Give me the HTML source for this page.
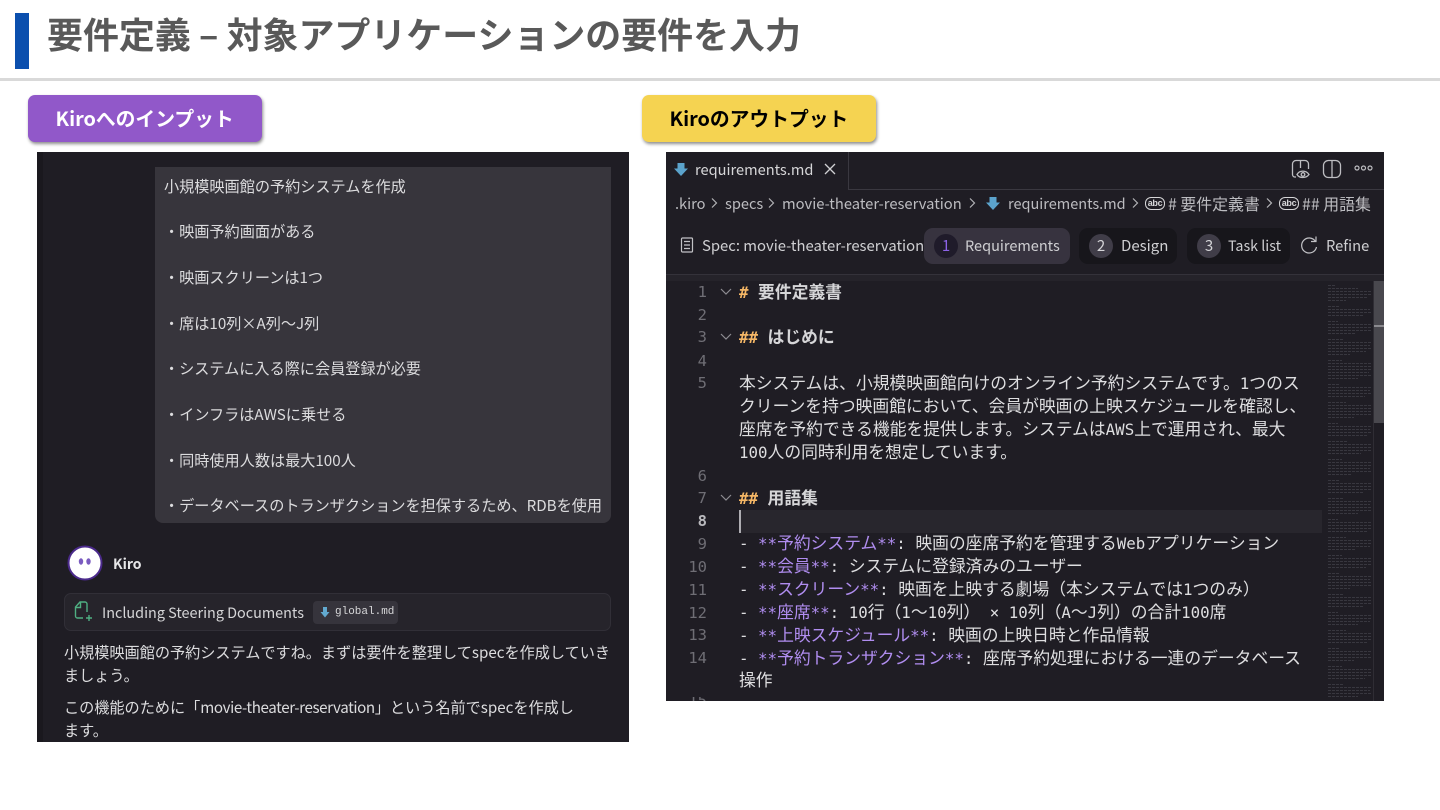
<!DOCTYPE html>
<html lang="ja"><head><meta charset="utf-8"><title>要件定義</title>
<style>
*{margin:0;padding:0;box-sizing:border-box}
html,body{width:1440px;height:810px;overflow:hidden;background:#fff}
body{position:relative;font-family:"Liberation Sans","Noto Sans CJK JP",sans-serif}
.a{position:absolute;white-space:nowrap}
.n{font-family:"Noto Sans CJK JP",sans-serif}
.t{font-family:"Noto Sans CJK JP",sans-serif;font-size:15.15px;line-height:22px;color:#dcdcde;filter:blur(.25px)}
.u{left:164px}
.e{left:739px;font-family:"Noto Sans CJK JP",sans-serif;font-size:16.8px;line-height:22px;color:#dedee0;height:22px;filter:blur(.25px)}
.m{font-family:"DejaVu Sans Mono",monospace;font-size:15.8px;line-height:1;white-space:pre}
.l{width:40px;text-align:right;left:667px;font-family:"DejaVu Sans Mono",monospace;font-size:15.5px;line-height:22px;color:#6f6e75;filter:blur(.25px)}
.p{color:#b08df0}
.o{color:#f5b766;font-weight:700}
.b{font-weight:700;color:#d6d6d8}
.tb{font-family:"Noto Sans CJK JP",sans-serif;font-size:14.6px;line-height:22px;color:#cfcfd2;filter:blur(.25px)}
.bc{color:#bcbcc0;top:193px}
.pill{position:absolute;top:228px;height:36px;border-radius:9px;background:#17161b}
.c{position:absolute;top:234px;width:24px;height:24px;border-radius:50%;background:#403d48;color:#d5d5d8;text-align:center;font:15px/24px "Noto Sans CJK JP",sans-serif}
.abc{position:absolute;top:197px;width:20px;height:13px;border:1.5px solid #d6d6d8;border-radius:6px;font:700 9px/10px 'Liberation Sans',sans-serif;color:#d6d6d8;text-align:center;letter-spacing:-.3px}
</style></head><body>

<div class="a" style="left:15px;top:13px;width:14px;height:56px;background:#0b4fae"></div>
<div class="a n" style="left:47px;top:7px;font-size:35.95px;line-height:52px;font-weight:700;color:#595959">要件定義 – 対象アプリケーションの要件を入力</div>
<div class="a" style="left:0;top:78px;width:1440px;height:3px;background:#d9d9d9"></div>

<div class="a n" style="left:28px;top:95px;width:234px;height:47px;border-radius:7px;background:#9158c9;box-shadow:1px 2px 3px rgba(0,0,0,.45);color:#fff;font-size:19.8px;font-weight:700;line-height:46px;padding-left:27.500px">Kiroへのインプット</div>
<div class="a n" style="left:642px;top:95px;width:234px;height:47px;border-radius:7px;background:#f5d351;box-shadow:1px 2px 3px rgba(0,0,0,.45);color:#000;font-size:19.8px;font-weight:700;line-height:46px;padding-left:27.500px">Kiroのアウトプット</div>

<!-- left panel -->
<div class="a" style="left:37px;top:152px;width:592px;height:590px;background:#1f1d24;overflow:hidden"></div>
<div class="a" style="left:37px;top:152px;width:6px;height:590px;background:#1a181e"></div>
<div class="a" style="left:155px;top:167px;width:456px;height:356px;background:#37353c;border-radius:0 0 8px 8px"></div>
<div class="a t u" style="top:175px">小規模映画館の予約システムを作成</div>
<div class="a t u" style="top:220px">・映画予約画面がある</div>
<div class="a t u" style="top:266px">・映画スクリーンは1つ</div>
<div class="a t u" style="top:312px">・席は10列×A列〜J列</div>
<div class="a t u" style="top:357px">・システムに入る際に会員登録が必要</div>
<div class="a t u" style="top:403px">・インフラはAWSに乗せる</div>
<div class="a t u" style="top:448.500px">・同時使用人数は最大100人</div>
<div class="a t u" style="top:494px">・データベースのトランザクションを担保するため、RDBを使用</div>

<svg class="a" style="left:67px;top:545px" width="36" height="36" viewBox="0 0 36 36">
<circle cx="18" cy="18" r="16.500" fill="#fff" stroke="#4b2a8c" stroke-width="2"/>
<ellipse cx="14" cy="16.500" rx="2.200" ry="3.200" fill="#7a5bc0"/><ellipse cx="21.500" cy="16.500" rx="2.200" ry="3.200" fill="#7a5bc0"/>
</svg>
<div class="a n" style="left:113px;top:553px;font-size:14px;line-height:22px;font-weight:700;color:#e6e6e8">Kiro</div>

<div class="a" style="left:64px;top:593px;width:547px;height:38px;background:#26242b;border:1px solid #312f37;border-radius:7px"></div>
<svg class="a" style="left:72px;top:600px" width="24" height="24" viewBox="0 0 24 24" fill="none" stroke="#4fae82" stroke-width="1.400">
<path d="M11 18H5.500a2 2 0 0 1-2-2V7l4.500-5h5a2 2 0 0 1 2 2v8"/><path d="M8.500 2.500v5H4"/><path d="M17 15v6M14 18h6"/>
</svg>
<div class="a n" style="left:102px;top:602px;font-size:14.4px;line-height:22px;color:#d6d6d8">Including Steering Documents</div>
<div class="a" style="left:313px;top:601px;width:85px;height:23px;background:#36343c;border-radius:4px"></div>
<svg class="a" style="left:320px;top:607px" width="10" height="11" viewBox="0 0 10 11"><path d="M3 0h4v5h2.500L5 10.500.5 5H3z" fill="#62a9cf"/></svg>
<div class="a" style="left:335px;top:602px;font-family:'Liberation Mono',monospace;font-size:11px;line-height:20px;color:#d6d6d8">global.md</div>

<div class="a t" style="left:64px;top:641px">小規模映画館の予約システムですね。まずは要件を整理してspecを作成していき</div>
<div class="a t" style="left:64px;top:664px">ましょう。</div>
<div class="a t" style="left:64px;top:696px">この機能のために「<span style="letter-spacing:-.4px">movie-theater-reservation</span>」という名前でspecを作成し</div>
<div class="a t" style="left:64px;top:718.500px">ます。</div>

<!-- right panel -->
<div class="a" style="left:666px;top:152px;width:718px;height:549px;background:#1f1d24"></div>
<div class="a" style="left:666px;top:152px;width:183px;height:38px;background:#1f1d24;border-right:1px solid #3a3840"></div>
<div class="a" style="left:849px;top:189px;width:535px;height:1px;background:#3a3840"></div>
<svg class="a" style="left:674px;top:162px" width="14" height="15" viewBox="0 0 14 15"><path d="M3.500 1h7v5.500H14L7 14 0 6.500h3.500z" fill="#5ba3cc"/></svg>
<div class="a tb" style="left:695px;top:159px;color:#d6d6d8">requirements.md</div>
<svg class="a" style="left:824px;top:163px" width="12" height="12" viewBox="0 0 12 12" stroke="#d0d0d3" stroke-width="1.300"><path d="M1 1l10 10M11 1L1 11"/></svg>

<svg class="a" style="left:1291px;top:159px" width="22" height="20" viewBox="0 0 22 20" fill="none" stroke="#bdbdc1" stroke-width="1.300">
<path d="M5 18H4a2.500 2.500 0 0 1-2.500-2.500V5A3.500 3.500 0 0 1 5 1.500h9A3.500 3.500 0 0 1 17.500 5v5"/><path d="M9.500 1.500V9"/><path d="M6 15.500c2.500-4.500 9-4.500 12 0-3 4-9.500 4-12 0z"/><circle cx="12" cy="15.500" r="1.800"/>
</svg>
<svg class="a" style="left:1322px;top:159px" width="20" height="20" viewBox="0 0 20 20" fill="none" stroke="#bdbdc1" stroke-width="1.300"><rect x="1.500" y="1.500" width="17" height="17" rx="5"/><path d="M10 1.500v17"/></svg>
<svg class="a" style="left:1354px;top:164px" width="20" height="8" viewBox="0 0 20 8" fill="none" stroke="#bdbdc1" stroke-width="1.200"><circle cx="3" cy="4" r="2"/><circle cx="9.500" cy="4" r="2"/><circle cx="16" cy="4" r="2"/></svg>

<svg class="a" style="left:710px;top:197px" width="8" height="12" viewBox="0 0 8 12" fill="none" stroke="#b4b4b8" stroke-width="1.200"><path d="M2 1.500L6.500 6 2 10.500"/></svg>
<svg class="a" style="left:767px;top:197px" width="8" height="12" viewBox="0 0 8 12" fill="none" stroke="#b4b4b8" stroke-width="1.200"><path d="M2 1.500L6.500 6 2 10.500"/></svg>
<svg class="a" style="left:968px;top:197px" width="8" height="12" viewBox="0 0 8 12" fill="none" stroke="#b4b4b8" stroke-width="1.200"><path d="M2 1.500L6.500 6 2 10.500"/></svg>
<svg class="a" style="left:1131px;top:197px" width="8" height="12" viewBox="0 0 8 12" fill="none" stroke="#b4b4b8" stroke-width="1.200"><path d="M2 1.500L6.500 6 2 10.500"/></svg>
<svg class="a" style="left:1265px;top:197px" width="8" height="12" viewBox="0 0 8 12" fill="none" stroke="#b4b4b8" stroke-width="1.200"><path d="M2 1.500L6.500 6 2 10.500"/></svg>

<div class="a tb bc" style="left:675px">.kiro</div>
<div class="a tb bc" style="left:725px">specs</div>
<div class="a tb bc" style="left:782px;font-size:14.75px">movie-theater-reservation</div>
<svg class="a" style="left:986px;top:196px" width="14" height="15" viewBox="0 0 14 15"><path d="M3.500 1h7v5.500H14L7 14 0 6.500h3.500z" fill="#5ba3cc"/></svg>
<div class="a tb bc" style="left:1008px;font-size:14.5px">requirements.md</div>
<div class="abc" style="left:1145px">abc</div>
<div class="a tb bc" style="left:1168px;font-size:15.9px"># 要件定義書</div>
<div class="abc" style="left:1279px">abc</div>
<div class="a tb bc" style="left:1302px;font-size:15.9px">## 用語集</div>

<svg class="a" style="left:680px;top:237px" width="14" height="16" viewBox="0 0 14 16" fill="none" stroke="#c2c2c6" stroke-width="1.200"><rect x="1.500" y="1" width="11" height="14" rx="1"/><path d="M4 4.500h6M4 8h6M4 11.500h6"/></svg>
<div class="a tb" style="left:702px;top:235px;font-size:14.85px">Spec: movie-theater-reservation</div>
<div class="pill" style="left:924px;width:146px;background:#37333f"></div>
<div class="c" style="left:934px;background:#1f1b2a;color:#8d63e8">1</div>
<div class="a tb" style="left:965px;top:235px;font-size:14.5px">Requirements</div>
<div class="pill" style="left:1079px;width:98px"></div>
<div class="c" style="left:1089px">2</div>
<div class="a tb" style="left:1121px;top:235px;font-size:15px">Design</div>
<div class="pill" style="left:1187px;width:103px"></div>
<div class="c" style="left:1197px">3</div>
<div class="a tb" style="left:1228px;top:235px;font-size:14.3px">Task list</div>
<svg class="a" style="left:1300px;top:235px" width="19" height="20" viewBox="0 0 19 20" fill="none" stroke="#c2c2c6" stroke-width="1.200"><path d="M15.500 6.500A7.500 7.500 0 1 0 16.500 12"/><path d="M16 1.500v5h-5"/></svg>
<div class="a tb" style="left:1326px;top:235px;font-size:14.7px">Refine</div>
<div class="a" style="left:666px;top:274px;width:718px;height:1px;background:#34323a"></div>
<div class="a" style="left:666px;top:275px;width:718px;height:6px;background:#25232a"></div>

<!-- line numbers -->
<div class="a l" style="top:281px">1</div>
<div class="a l" style="top:304px">2</div>
<div class="a l" style="top:326px">3</div>
<div class="a l" style="top:350px">4</div>
<div class="a l" style="top:372px">5</div>
<div class="a l" style="top:465px">6</div>
<div class="a l" style="top:487px">7</div>
<div class="a l" style="top:510px;color:#b9b9bd;font-weight:700">8</div>
<div class="a l" style="top:533px">9</div>
<div class="a l" style="top:556px">10</div>
<div class="a l" style="top:579px">11</div>
<div class="a l" style="top:602px">12</div>
<div class="a l" style="top:624px">13</div>
<div class="a l" style="top:647px">14</div>
<div class="a" style="left:666px;top:697px;width:42px;height:4px;overflow:hidden"><div class="a l" style="left:1px;top:0;line-height:8px">15</div></div>

<svg class="a" style="left:720px;top:288px" width="12" height="8" viewBox="0 0 12 8" fill="none" stroke="#8d8c92" stroke-width="1.200"><path d="M1 1l5 5 5-5"/></svg>
<svg class="a" style="left:720px;top:333px" width="12" height="8" viewBox="0 0 12 8" fill="none" stroke="#8d8c92" stroke-width="1.200"><path d="M1 1l5 5 5-5"/></svg>
<svg class="a" style="left:720px;top:494px" width="12" height="8" viewBox="0 0 12 8" fill="none" stroke="#8d8c92" stroke-width="1.200"><path d="M1 1l5 5 5-5"/></svg>

<div class="a" style="left:739px;top:510px;width:583px;height:23px;background:#28262d"></div>
<div class="a" style="left:739px;top:510px;width:2px;height:23px;background:#aeadb2"></div>

<div class="a e" style="top:280px"><span class="m o">#</span><span class="m"> </span><span class="b">要件定義書</span></div>
<div class="a e" style="top:325px"><span class="m o">##</span><span class="m"> </span><span class="b">はじめに</span></div>
<div class="a e" style="top:371px">本システムは、小規模映画館向けのオンライン予約システムです。<span class="m">1</span>つのス</div>
<div class="a e" style="top:394px">クリーンを持つ映画館において、会員が映画の上映スケジュールを確認し、</div>
<div class="a e" style="top:417px">座席を予約できる機能を提供します。システムは<span class="m">AWS</span>上で運用され、最大</div>
<div class="a e" style="top:440px"><span class="m">100</span>人の同時利用を想定しています。</div>
<div class="a e" style="top:486px"><span class="m o">##</span><span class="m"> </span><span class="b">用語集</span></div>
<div class="a e" style="top:531px"><span class="m">- </span><span class="p"><span class="m">**</span>予約システム<span class="m">**</span></span><span class="m">: </span>映画の座席予約を管理する<span class="m">Web</span>アプリケーション</div>
<div class="a e" style="top:554px"><span class="m">- </span><span class="p"><span class="m">**</span>会員<span class="m">**</span></span><span class="m">: </span>システムに登録済みのユーザー</div>
<div class="a e" style="top:577px"><span class="m">- </span><span class="p"><span class="m">**</span>スクリーン<span class="m">**</span></span><span class="m">: </span>映画を上映する劇場（本システムでは<span class="m">1</span>つのみ）</div>
<div class="a e" style="top:600px"><span class="m">- </span><span class="p"><span class="m">**</span>座席<span class="m">**</span></span><span class="m">: 10</span>行（<span class="m">1</span>〜<span class="m">10</span>列）<span class="m"> × 10</span>列（<span class="m">A</span>〜<span class="m">J</span>列）の合計<span class="m">100</span>席</div>
<div class="a e" style="top:623px"><span class="m">- </span><span class="p"><span class="m">**</span>上映スケジュール<span class="m">**</span></span><span class="m">: </span>映画の上映日時と作品情報</div>
<div class="a e" style="top:645.500px"><span class="m">- </span><span class="p"><span class="m">**</span>予約トランザクション<span class="m">**</span></span><span class="m">: </span>座席予約処理における一連のデータベース</div>
<div class="a e" style="top:668px">操作</div>

<!-- minimap -->
<svg class="a" style="left:1328px;top:281px;opacity:.6" width="45" height="420" viewBox="0 0 45 420" fill="none" stroke="#4a4952" stroke-width="1" stroke-dasharray="3 1">
<path d="M0 4.500h8M0 7.500h30M0 10.500h43M0 13.500h44M0 16.500h40M0 19.500h18M0 25.500h12M0 28.500h42M0 31.500h44M0 34.500h36M0 40.500h10M0 43.500h44M0 46.500h43M0 49.500h44M0 52.500h28M0 58.500h16M0 61.500h44M0 64.500h42M0 67.500h44M0 70.500h38M0 73.500h22M0 79.500h14M0 82.500h44M0 85.500h43M0 88.500h44M0 91.500h41M0 94.500h44M0 97.500h30M0 103.500h12M0 106.500h44M0 109.500h42M0 112.500h44M0 115.500h37M0 121.500h18M0 124.500h44M0 127.500h43M0 130.500h44M0 133.500h44M0 136.500h26M0 142.500h10M0 145.500h44M0 148.500h42M0 151.500h44M0 154.500h39M0 160.500h20M0 163.500h44M0 166.500h43M0 169.500h44M0 172.500h33M0 178.500h14M0 181.500h44M0 184.500h44M0 187.500h42M0 190.500h44M0 193.500h24M0 199.500h12M0 202.500h44M0 205.500h43M0 208.500h44M0 211.500h36M0 217.500h16M0 220.500h44M0 223.500h42M0 226.500h44M0 229.500h44M0 232.500h30M0 238.500h10M0 241.500h44M0 244.500h43M0 247.500h44M0 250.500h40M0 256.500h18M0 259.500h44M0 262.500h44M0 265.500h42M0 268.500h28M0 274.500h14M0 277.500h44M0 280.500h43M0 283.500h44M0 286.500h38M0 292.500h12M0 295.500h44M0 298.500h42M0 301.500h44M0 304.500h44M0 307.500h22M0 313.500h16M0 316.500h44M0 319.500h43M0 322.500h44M0 325.500h35M0 331.500h10M0 334.500h44M0 337.500h44M0 340.500h42M0 343.500h30M0 349.500h18M0 352.500h44M0 355.500h43M0 358.500h44M0 361.500h40M0 367.500h12M0 370.500h44M0 373.500h42M0 376.500h44M0 379.500h26M0 385.500h14M0 388.500h44M0 391.500h43M0 394.500h44M0 397.500h37M0 403.500h16M0 406.500h44M0 409.500h42M0 412.500h44M0 415.500h30"/>
</svg>
<div class="a" style="left:1374px;top:281px;width:10px;height:142px;background:#49484e"></div>
<div class="a" style="left:1374px;top:325px;width:10px;height:2px;background:#8b8a8f"></div>
<div class="a" style="left:1373px;top:281px;width:1px;height:420px;background:#2f2d34"></div>

</body></html>
